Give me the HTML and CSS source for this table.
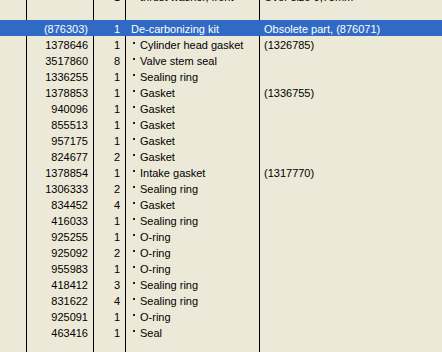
FILE: index.html
```html
<!DOCTYPE html>
<html>
<head>
<meta charset="utf-8">
<link rel="stylesheet" href="styles.css">
</head>
<body>
<div class="list">
  <div class="row"><div class="c0"></div><div class="c1"></div><div class="c2">1</div><div class="c3"><span class="dot"></span>thrust washer, front</div><div class="c4">Over size 0,75mm</div></div>
  <div class="row"><div class="c0"></div><div class="c1"></div><div class="c2"></div><div class="c3"></div><div class="c4"></div></div>
  <div class="row sel"><div class="c0"></div><div class="c1">(876303)</div><div class="c2">1</div><div class="c3">De-carbonizing kit</div><div class="c4">Obsolete part, (876071)</div></div>
  <div class="row"><div class="c0"></div><div class="c1">1378646</div><div class="c2">1</div><div class="c3"><span class="dot"></span>Cylinder head gasket</div><div class="c4">(1326785)</div></div>
  <div class="row"><div class="c0"></div><div class="c1">3517860</div><div class="c2">8</div><div class="c3"><span class="dot"></span>Valve stem seal</div><div class="c4"></div></div>
  <div class="row"><div class="c0"></div><div class="c1">1336255</div><div class="c2">1</div><div class="c3"><span class="dot"></span>Sealing ring</div><div class="c4"></div></div>
  <div class="row"><div class="c0"></div><div class="c1">1378853</div><div class="c2">1</div><div class="c3"><span class="dot"></span>Gasket</div><div class="c4">(1336755)</div></div>
  <div class="row"><div class="c0"></div><div class="c1">940096</div><div class="c2">1</div><div class="c3"><span class="dot"></span>Gasket</div><div class="c4"></div></div>
  <div class="row"><div class="c0"></div><div class="c1">855513</div><div class="c2">1</div><div class="c3"><span class="dot"></span>Gasket</div><div class="c4"></div></div>
  <div class="row"><div class="c0"></div><div class="c1">957175</div><div class="c2">1</div><div class="c3"><span class="dot"></span>Gasket</div><div class="c4"></div></div>
  <div class="row"><div class="c0"></div><div class="c1">824677</div><div class="c2">2</div><div class="c3"><span class="dot"></span>Gasket</div><div class="c4"></div></div>
  <div class="row"><div class="c0"></div><div class="c1">1378854</div><div class="c2">1</div><div class="c3"><span class="dot"></span>Intake gasket</div><div class="c4">(1317770)</div></div>
  <div class="row"><div class="c0"></div><div class="c1">1306333</div><div class="c2">2</div><div class="c3"><span class="dot"></span>Sealing ring</div><div class="c4"></div></div>
  <div class="row"><div class="c0"></div><div class="c1">834452</div><div class="c2">4</div><div class="c3"><span class="dot"></span>Gasket</div><div class="c4"></div></div>
  <div class="row"><div class="c0"></div><div class="c1">416033</div><div class="c2">1</div><div class="c3"><span class="dot"></span>Sealing ring</div><div class="c4"></div></div>
  <div class="row"><div class="c0"></div><div class="c1">925255</div><div class="c2">1</div><div class="c3"><span class="dot"></span>O-ring</div><div class="c4"></div></div>
  <div class="row"><div class="c0"></div><div class="c1">925092</div><div class="c2">2</div><div class="c3"><span class="dot"></span>O-ring</div><div class="c4"></div></div>
  <div class="row"><div class="c0"></div><div class="c1">955983</div><div class="c2">1</div><div class="c3"><span class="dot"></span>O-ring</div><div class="c4"></div></div>
  <div class="row"><div class="c0"></div><div class="c1">418412</div><div class="c2">3</div><div class="c3"><span class="dot"></span>Sealing ring</div><div class="c4"></div></div>
  <div class="row"><div class="c0"></div><div class="c1">831622</div><div class="c2">4</div><div class="c3"><span class="dot"></span>Sealing ring</div><div class="c4"></div></div>
  <div class="row"><div class="c0"></div><div class="c1">925091</div><div class="c2">1</div><div class="c3"><span class="dot"></span>O-ring</div><div class="c4"></div></div>
  <div class="row"><div class="c0"></div><div class="c1">463416</div><div class="c2">1</div><div class="c3"><span class="dot"></span>Seal</div><div class="c4"></div></div>
  <div class="row"><div class="c0"></div><div class="c1"></div><div class="c2"></div><div class="c3"></div><div class="c4"></div></div>
</div>
</body>
</html>
```
FILE: styles.css
```css
html, body {
  margin: 0;
  padding: 0;
  background: #ECE9D8;
  overflow: hidden;
}
.list {
  margin-top: -12px;
  font-family: "Liberation Sans", Arial, sans-serif;
  font-size: 11px;
  color: #000;
}
.row {
  display: grid;
  grid-template-columns: 26px 67px 32px 134px 1fr;
  height: 16px;
}
.row > div {
  white-space: nowrap;
  overflow: hidden;
  box-sizing: border-box;
  height: 16px;
  line-height: 16px;
  padding-top: 1px;
}
.c1, .c2, .c3, .c4 {
  border-left: 1px solid #000;
}
.c1, .c2 {
  text-align: right;
  padding-right: 5px;
}
.c3 {
  padding-left: 5px;
  display: flex;
  align-items: center;
}
.c4 {
  padding-left: 4px;
}
.dot {
  width: 2px;
  height: 2px;
  background: #222;
  margin-left: 2px;
  margin-right: 5px;
  margin-top: -4px;
  flex: none;
}
.sel {
  background: #316AC5;
  color: #fff;
}
.sel > div {
  border-left-color: transparent;
}
```
